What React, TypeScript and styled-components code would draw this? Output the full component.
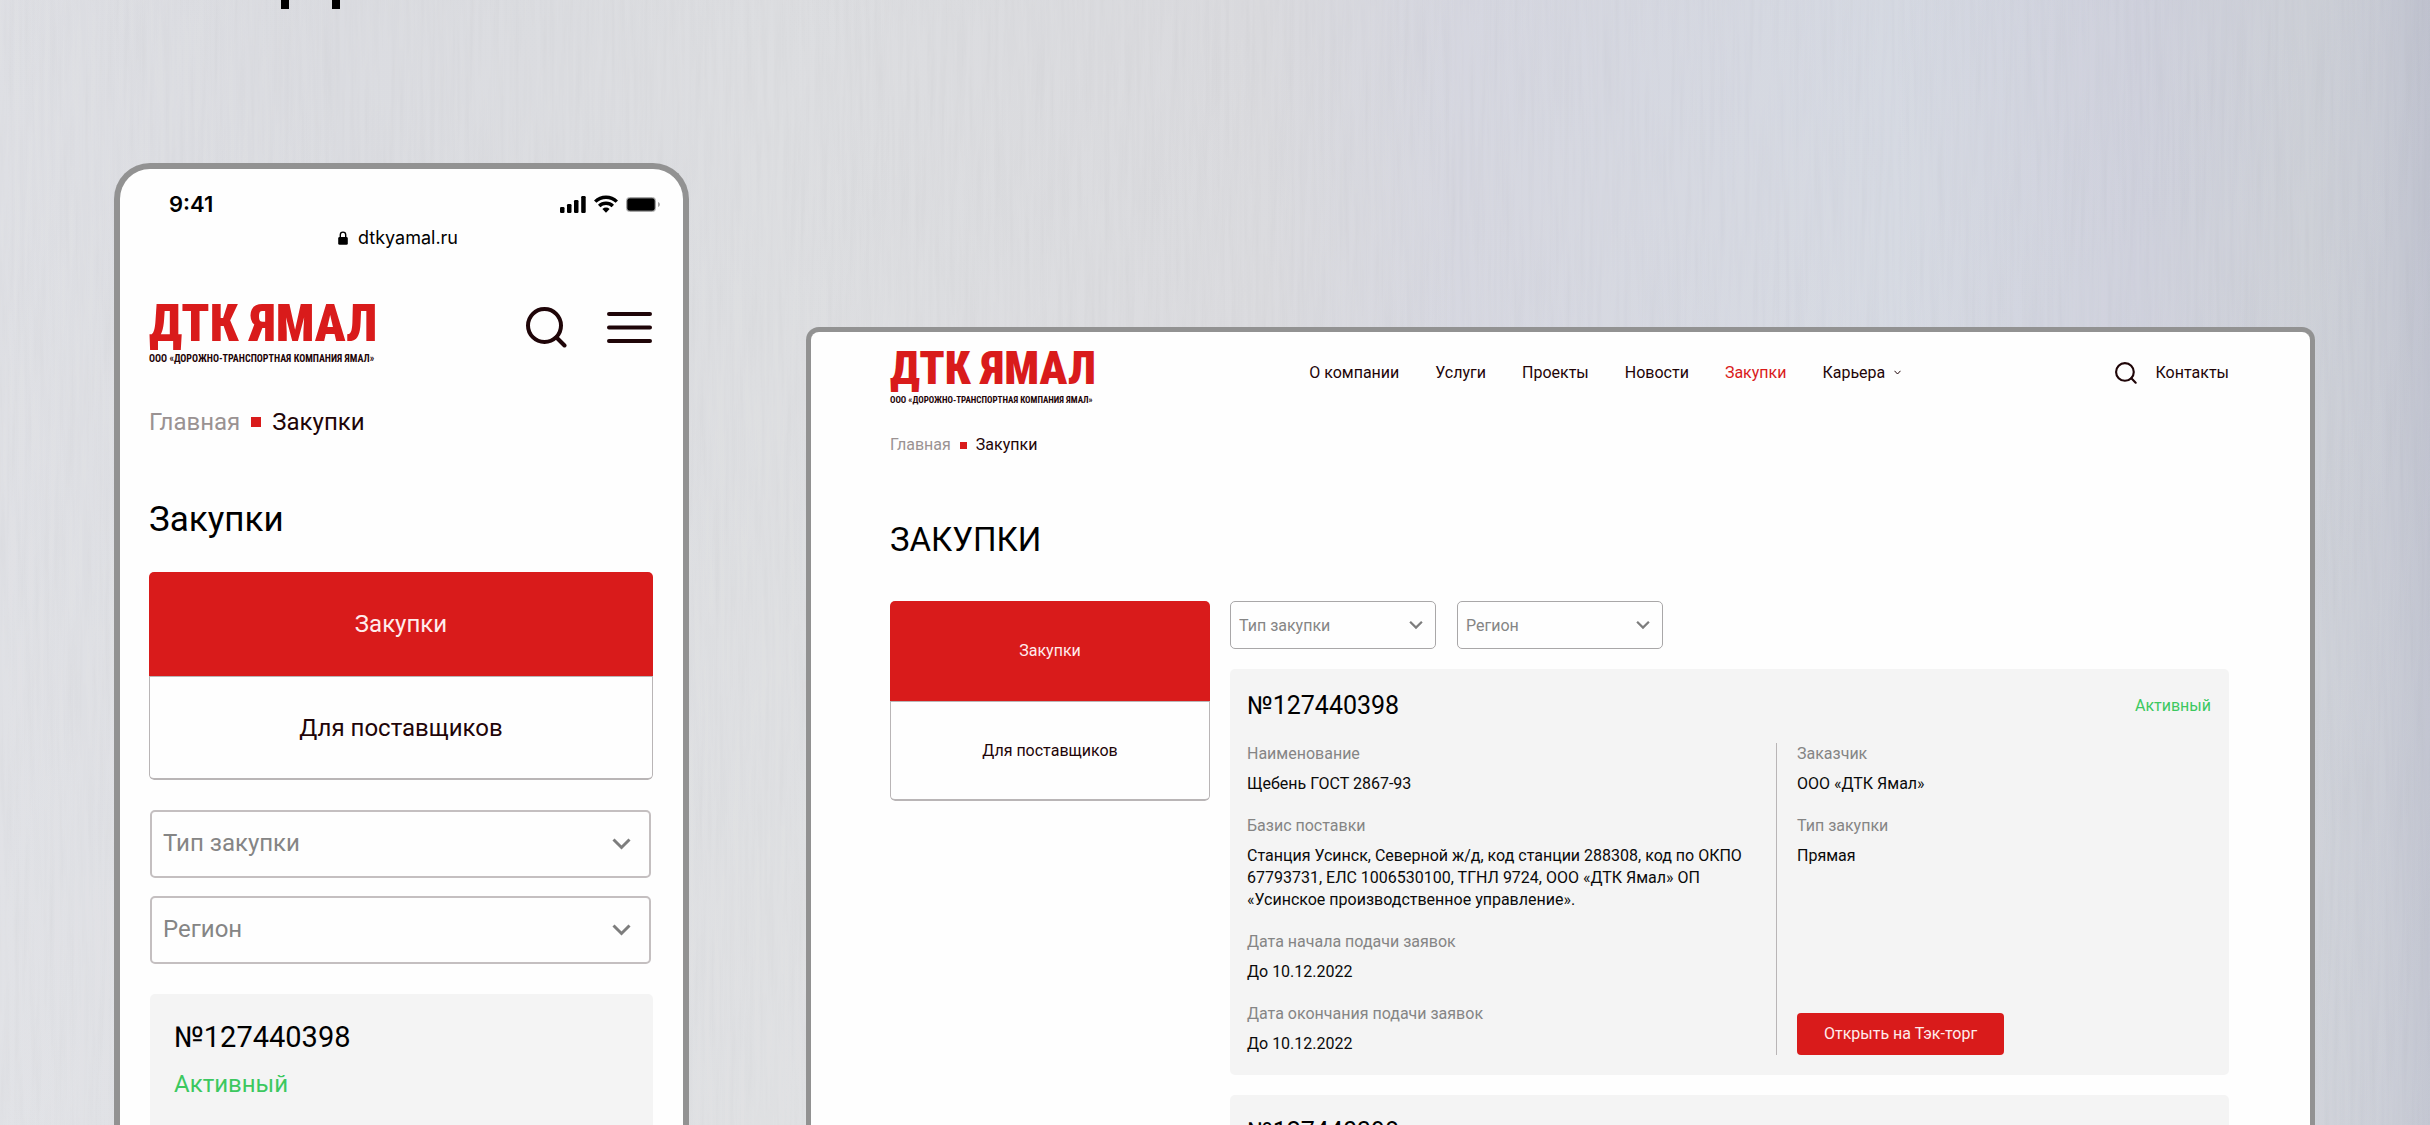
import React from 'react';
import styled, { createGlobalStyle, css } from 'styled-components';

const color = {
  red: '#d91b1b',
  ink: '#1f0508',
  black: '#0a0a0a',
  muted: '#858585',
  crumb: '#9a9292',
  line: '#b9b5b6',
  frame: '#929292',
  card: '#f4f4f4',
  green: '#3cc85f',
};

type Size = 'phone' | 'desktop';
interface Sized {
  $size: Size;
}

const Global = createGlobalStyle`
  *, *::before, *::after { box-sizing: border-box; }
  body { margin: 0; font-family: Roboto, "Liberation Sans", sans-serif; color: ${color.black}; }
  h1, h2, p, dl, dd, ul { margin: 0; padding: 0; font-weight: 400; }
  a { color: inherit; text-decoration: none; }
`;

const Stage = styled.div`
  position: relative;
  isolation: isolate;
  display: flex;
  flex-direction: column;
  height: 100vh;
  padding: 0 115px 0 114px;
  overflow: hidden;
  background:
    linear-gradient(180deg, rgba(190, 193, 208, 0.08), rgba(235, 238, 242, 0.12)),
    linear-gradient(90deg, #dfe0e4 0%, #dbdce0 14%, #dddee0 32%, #dadadd 52%, #d5d6df 60%, #d5d9e2 78%, #cdcfdb 88%, #cbced5 95%, #c5c8d2 98%, #bbbecb 100%);
`;

const Grain = styled.svg`
  position: absolute;
  inset: 0;
  z-index: -1;
  width: 100%;
  height: 100%;
  opacity: 0.06;
`;

const TitleEdge = styled.svg`
  display: block;
  flex: none;
  width: 59px;
  height: 9px;
  margin-left: 167px;
`;

const Devices = styled.main`
  flex: 1;
  min-height: 0;
  display: grid;
  grid-template-columns: minmax(0, 575fr) minmax(0, 1509fr);
  grid-template-rows: minmax(0, 1fr);
  column-gap: 117px;
`;

const Phone = styled.section`
  display: flex;
  flex-direction: column;
  margin-top: 154px;
  overflow: hidden;
  background: #fefefe;
  border: 6px solid ${color.frame};
  border-bottom: 0;
  border-radius: 36px 36px 0 0;
`;

const Desktop = styled.section`
  display: flex;
  flex-direction: column;
  margin-top: 318px;
  padding: 18px 81px 0 79px;
  overflow: hidden;
  background: #fefefe;
  border: 5px solid ${color.frame};
  border-bottom: 0;
  border-radius: 13px 13px 0 0;
`;

const StatusBar = styled.div`
  display: flex;
  align-items: center;
  justify-content: space-between;
  padding: 23px 22px 0 49px;
  font: 600 22px/24px Inter, sans-serif;
  color: #000;
`;

const StatusIcons = styled.div`
  display: flex;
  align-items: center;
  gap: 8px;
`;

const AddressBar = styled.div`
  display: flex;
  align-items: center;
  justify-content: center;
  gap: 10px;
  margin-top: 11px;
  padding-right: 7px;
  font: 400 18px/22px Inter, sans-serif;
  color: #000;
`;

const PhoneBody = styled.div`
  flex: 1;
  display: flex;
  flex-direction: column;
  padding: 55px 30px 0 29px;
`;

const Header = styled.header`
  display: flex;
  align-items: center;
  justify-content: space-between;
`;

const LogoLink = styled.a<Sized>`
  display: flex;
  flex-direction: column;
  gap: 9px;
  font-family: 'Roboto Condensed', Roboto, sans-serif;
  white-space: nowrap;
`;

const LogoName = styled.span<Sized>`
  font-weight: 900;
  color: ${color.red};
  ${p => (p.$size === 'phone' ? css`font-size: 51px; line-height: 40px;` : css`font-size: 46px; line-height: 36px;`)}
`;

const LogoNote = styled.span<Sized>`
  font-weight: 700;
  color: ${color.ink};
  ${p => (p.$size === 'phone' ? css`font-size: 10px; line-height: 12px;` : css`font-size: 9px; line-height: 10px;`)}
`;

const PhoneActions = styled.div`
  display: flex;
  align-items: center;
  gap: 40px;
  padding: 0 1px 14px 0;
`;

const IconButton = styled.button`
  display: flex;
  padding: 0;
  border: 0;
  background: none;
  color: ${color.ink};
  cursor: pointer;
`;

const Nav = styled.nav`
  display: flex;
  align-items: center;
  gap: 36px;
  padding-bottom: 10px;
  font-size: 16px;
  line-height: 22px;
  white-space: nowrap;
`;

const NavLink = styled.a<{ $current?: boolean }>`
  display: flex;
  align-items: center;
  gap: 9px;
  color: ${p => (p.$current ? color.red : color.ink)};
`;

const Contacts = styled.div`
  display: flex;
  align-items: center;
  gap: 19px;
  padding-bottom: 10px;
  font-size: 16px;
  line-height: 22px;
  color: ${color.ink};
`;

const Crumbs = styled.nav<Sized>`
  display: flex;
  align-items: center;
  color: ${color.ink};
  ${p =>
    p.$size === 'phone'
      ? css`gap: 11px; margin-top: 43px; font-size: 24px; line-height: 28px;`
      : css`gap: 9px; margin-top: 29px; font-size: 16px; line-height: 22px;`}
`;

const CrumbHome = styled.a`
  color: ${color.crumb};
`;

const CrumbMark = styled.span<Sized>`
  background: ${color.red};
  ${p => (p.$size === 'phone' ? css`width: 10px; height: 10px;` : css`width: 7px; height: 7px;`)}
`;

const Title = styled.h1<Sized>`
  margin-top: 64px;
  line-height: 40px;
  color: #000;
  font-size: ${p => (p.$size === 'phone' ? 35 : 33)}px;
`;

const Tabs = styled.nav<Sized>`
  display: grid;
  grid-auto-rows: ${p => (p.$size === 'phone' ? 104 : 100)}px;
  align-self: start;
  overflow: hidden;
  border-radius: 5px;
  ${p =>
    p.$size === 'phone'
      ? css`width: 100%; margin-top: 32px; font-size: 24px; line-height: 28px;`
      : css`font-size: 16px; line-height: 22px;`}
`;

const Tab = styled.a<{ $active?: boolean }>`
  display: flex;
  align-items: center;
  justify-content: center;
  ${p =>
    p.$active
      ? css`background: ${color.red}; color: #ffecec;`
      : css`border: 1px solid ${color.line}; border-bottom-width: 2px; border-radius: 0 0 5px 5px; color: ${color.ink};`}
`;

const Filters = styled.div<Sized>`
  display: flex;
  ${p =>
    p.$size === 'phone'
      ? css`flex-direction: column; gap: 18px; margin-top: 30px; padding: 0 2px 0 1px;`
      : css`gap: 21px;`}
`;

const SelectBox = styled.div<Sized>`
  position: relative;
  width: ${p => (p.$size === 'phone' ? '100%' : '206px')};
`;

const Select = styled.select<Sized>`
  appearance: none;
  display: block;
  width: 100%;
  border-radius: 5px;
  background: #fefefe;
  color: ${color.muted};
  font-family: inherit;
  ${p =>
    p.$size === 'phone'
      ? css`height: 68px; padding: 0 11px 3px; border: 2px solid #c4bfc0; font-size: 24px;`
      : css`height: 48px; padding: 0 8px; border: 1px solid #a9a7a8; font-size: 16px;`}
`;

const SelectArrow = styled.svg<Sized>`
  position: absolute;
  top: 50%;
  transform: translateY(-50%);
  pointer-events: none;
  ${p =>
    p.$size === 'phone'
      ? css`right: 20px; width: 19px; height: 12px;`
      : css`right: 13px; width: 14px; height: 9px;`}
`;

const PhoneCard = styled.article`
  flex: 1;
  margin: 30px 0 0 1px;
  padding: 25px 24px;
  border-radius: 5px 5px 0 0;
  background: ${color.card};
`;

const Number = styled.h2<Sized>`
  color: #000;
  ${p => (p.$size === 'phone' ? css`font-size: 29px; line-height: 36px;` : css`font-size: 25px; line-height: 30px;`)}
`;

const Status = styled.p<Sized>`
  color: ${color.green};
  ${p =>
    p.$size === 'phone'
      ? css`margin-top: 15px; font-size: 24px; line-height: 28px;`
      : css`font-size: 16px; line-height: 22px;`}
`;

const DesktopBody = styled.div`
  display: grid;
  grid-template-columns: 320px minmax(0, 1fr);
  gap: 20px;
  margin-top: 41px;
`;

const Results = styled.div`
  display: flex;
  flex-direction: column;
  gap: 20px;
`;

const Card = styled.article`
  padding: 22px 18px 20px 17px;
  border-radius: 5px;
  background: ${color.card};
`;

const CardHead = styled.div`
  display: flex;
  align-items: center;
  justify-content: space-between;
`;

const CardBody = styled.div`
  display: grid;
  grid-template-columns: minmax(0, 529fr) minmax(0, 435fr);
  margin-top: 22px;
`;

const Fields = styled.dl`
  display: grid;
  align-content: start;
  gap: 20px;
  padding-right: 12px;
  font-size: 16px;
  line-height: 22px;
`;

const FieldLabel = styled.dt`
  color: ${color.muted};
`;

const FieldValue = styled.dd`
  && {
    margin-top: 8px;
  }
`;

const Side = styled.div`
  display: flex;
  flex-direction: column;
  align-items: flex-start;
  justify-content: space-between;
  padding-left: 20px;
  border-left: 1px solid ${color.line};
`;

const OpenButton = styled.button`
  height: 42px;
  padding: 0 27px;
  border: 0;
  border-radius: 4px;
  background: ${color.red};
  color: #ffecec;
  font: 400 16px/22px Roboto, sans-serif;
  cursor: pointer;
`;

const SearchIcon = ({ size, stroke }: { size: number; stroke: number }) => (
  <svg width={size} height={size} viewBox="0 0 41 41" fill="none" stroke="currentColor" strokeWidth={stroke} strokeLinecap="round">
    <circle cx="18.5" cy="18.5" r="16.5" />
    <path d="M30.5 30.5 38.5 38.5" />
  </svg>
);

const BurgerIcon = () => (
  <svg width="45" height="31" viewBox="0 0 45 31" fill="none" stroke="currentColor" strokeWidth="4" strokeLinecap="round">
    <path d="M2 2H43M2 15.5H43M2 29H43" />
  </svg>
);

const SignalIcon = () => (
  <svg width="26" height="17" viewBox="0 0 26 17">
    <rect x="0" y="11" width="4.5" height="6" rx="1.2" />
    <rect x="7" y="8" width="4.5" height="9" rx="1.2" />
    <rect x="14" y="4" width="4.5" height="13" rx="1.2" />
    <rect x="21.2" y="0" width="4.5" height="17" rx="1.2" />
  </svg>
);

const WifiIcon = () => (
  <svg width="24" height="18" viewBox="0 0 24 18" fill="none" stroke="#000" strokeWidth="3.4">
    <path d="M1.2 6.6A15.4 15.4 0 0 1 22.8 6.6" />
    <path d="M5.2 11A9.6 9.6 0 0 1 18.8 11" />
    <path d="M8.4 14A5.2 5.2 0 0 1 15.6 14L12 17.8Z" fill="#000" stroke="none" />
  </svg>
);

const BatteryIcon = () => (
  <svg width="35" height="15" viewBox="0 0 35 15">
    <rect x="0.5" y="0.5" width="29" height="14" rx="3" fill="#fff" stroke="#a6a6a6" />
    <rect x="1.2" y="1.2" width="27.6" height="12.6" rx="2.2" />
    <path d="M32 5C34.6 5.8 34.6 9.2 32 10Z" fill="#a6a6a6" />
  </svg>
);

const LockIcon = () => (
  <svg width="10" height="14" viewBox="0 0 10 14">
    <path d="M2.3 7V3.8a2.7 2.7 0 0 1 5.4 0V7" fill="none" stroke="#000" strokeWidth="1.4" />
    <rect x="0.2" y="6" width="9.6" height="7.8" rx="1.4" />
  </svg>
);

const Logo = ({ size }: { size: Size }) => (
  <LogoLink href="#" $size={size}>
    <LogoName $size={size}>ДТК ЯМАЛ</LogoName>
    <LogoNote $size={size}>ООО «ДОРОЖНО-ТРАНСПОРТНАЯ КОМПАНИЯ ЯМАЛ»</LogoNote>
  </LogoLink>
);

const Breadcrumbs = ({ size }: { size: Size }) => (
  <Crumbs $size={size}>
    <CrumbHome href="#">Главная</CrumbHome>
    <CrumbMark $size={size} />
    <span>Закупки</span>
  </Crumbs>
);

const SectionTabs = ({ size }: { size: Size }) => (
  <Tabs $size={size}>
    <Tab href="#" $active>Закупки</Tab>
    <Tab href="#">Для поставщиков</Tab>
  </Tabs>
);

const FilterSelect = ({ size, label }: { size: Size; label: string }) => (
  <SelectBox $size={size}>
    <Select $size={size} aria-label={label} defaultValue="">
      <option value="">{label}</option>
    </Select>
    <SelectArrow $size={size} viewBox="0 0 19 12" fill="none" stroke="#7d7d7d" strokeWidth="3">
      <path d="M1.5 1.5 9.5 9.5 17.5 1.5" />
    </SelectArrow>
  </SelectBox>
);

const FilterRow = ({ size }: { size: Size }) => (
  <Filters $size={size}>
    <FilterSelect size={size} label="Тип закупки" />
    <FilterSelect size={size} label="Регион" />
  </Filters>
);

const FieldList = ({ items }: { items: [string, string][] }) => (
  <Fields>
    {items.map(([label, value]) => (
      <div key={label}>
        <FieldLabel>{label}</FieldLabel>
        <FieldValue>{value}</FieldValue>
      </div>
    ))}
  </Fields>
);

const tenderFields: [string, string][] = [
  ['Наименование', 'Щебень ГОСТ 2867-93'],
  [
    'Базис поставки',
    'Станция Усинск, Северной ж/д, код станции 288308, код по ОКПО 67793731, ЕЛС 1006530100, ТГНЛ 9724, ООО «ДТК Ямал» ОП «Усинское производственное управление».',
  ],
  ['Дата начала подачи заявок', 'До 10.12.2022'],
  ['Дата окончания подачи заявок', 'До 10.12.2022'],
];

const customerFields: [string, string][] = [
  ['Заказчик', 'ООО «ДТК Ямал»'],
  ['Тип закупки', 'Прямая'],
];

const menu = ['О компании', 'Услуги', 'Проекты', 'Новости', 'Закупки', 'Карьера'];

export default function App() {
  return (
    <>
      <Global />
      <Stage>
        <Grain aria-hidden="true">
          <filter id="brushed">
            <feTurbulence type="fractalNoise" baseFrequency="0.2 0.008" numOctaves="3" seed="4" />
            <feColorMatrix type="matrix" values="1 0 0 0 0.35  1 0 0 0 0.35  1 0 0 0 0.37  0 0 0 0 1" />
          </filter>
          <rect width="100%" height="100%" filter="url(#brushed)" />
        </Grain>
        <TitleEdge viewBox="0 0 59 9" aria-hidden="true">
          <path d="M0 0H8V9H0ZM51 0H59V9H51Z" />
        </TitleEdge>
        <Devices>
          <Phone>
            <StatusBar>
              <span>9:41</span>
              <StatusIcons>
                <SignalIcon />
                <WifiIcon />
                <BatteryIcon />
              </StatusIcons>
            </StatusBar>
            <AddressBar>
              <LockIcon />
              <span>dtkyamal.ru</span>
            </AddressBar>
            <PhoneBody>
              <Header>
                <Logo size="phone" />
                <PhoneActions>
                  <IconButton aria-label="Поиск"><SearchIcon size={41} stroke={4} /></IconButton>
                  <IconButton aria-label="Меню"><BurgerIcon /></IconButton>
                </PhoneActions>
              </Header>
              <Breadcrumbs size="phone" />
              <Title $size="phone">Закупки</Title>
              <SectionTabs size="phone" />
              <FilterRow size="phone" />
              <PhoneCard>
                <Number $size="phone">№127440398</Number>
                <Status $size="phone">Активный</Status>
              </PhoneCard>
            </PhoneBody>
          </Phone>

          <Desktop>
            <Header>
              <Logo size="desktop" />
              <Nav>
                {menu.map(item => (
                  <NavLink key={item} href="#" $current={item === 'Закупки'}>
                    {item}
                    {item === 'Карьера' && (
                      <svg width="7" height="5" viewBox="0 0 7 5" fill="none" stroke="currentColor">
                        <path d="M0.5 0.8 3.5 4 6.5 0.8" />
                      </svg>
                    )}
                  </NavLink>
                ))}
              </Nav>
              <Contacts>
                <IconButton aria-label="Поиск"><SearchIcon size={22} stroke={4} /></IconButton>
                <a href="#">Контакты</a>
              </Contacts>
            </Header>
            <Breadcrumbs size="desktop" />
            <Title $size="desktop">ЗАКУПКИ</Title>
            <DesktopBody>
              <SectionTabs size="desktop" />
              <Results>
                <FilterRow size="desktop" />
                <Card>
                  <CardHead>
                    <Number $size="desktop">№127440398</Number>
                    <Status $size="desktop">Активный</Status>
                  </CardHead>
                  <CardBody>
                    <FieldList items={tenderFields} />
                    <Side>
                      <FieldList items={customerFields} />
                      <OpenButton>Открыть на Тэк-торг</OpenButton>
                    </Side>
                  </CardBody>
                </Card>
                <Card>
                  <Number $size="desktop">№127440398</Number>
                </Card>
              </Results>
            </DesktopBody>
          </Desktop>
        </Devices>
      </Stage>
    </>
  );
}
